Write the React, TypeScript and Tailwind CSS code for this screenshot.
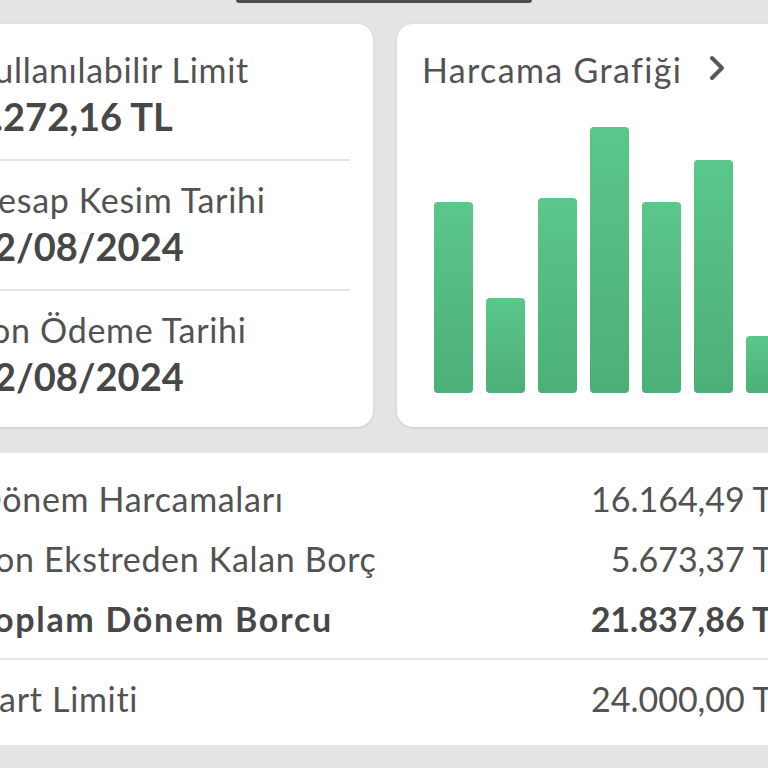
import React from 'react';

const bars = [191, 95, 195, 266, 191, 233, 57, 140];

const rows = [
  { label: 'Dönem Harcamaları', value: '16.164,49 TL' },
  { label: 'Son Ekstreden Kalan Borç', value: '5.673,37 TL' },
  { label: 'Toplam Dönem Borcu', value: '21.837,86 TL', bold: true },
];

const InfoBlock = ({ label, value }: { label: string; value: string }) => (
  <div>
    <div className="text-[34px] leading-[40px] tracking-[0.02em] text-[#525252]">{label}</div>
    <div className="mt-0.5 text-[38px] leading-[48px] font-bold text-[#474747]">{value}</div>
  </div>
);

export default function App() {
  return (
    <div
      className="w-[768px] h-[768px] overflow-hidden bg-[#e4e4e4]"
      style={{ fontFamily: 'Lato, "Noto Sans", sans-serif' }}
    >
      <div className="flex justify-center">
        <div className="w-[296px] h-[3px] rounded-b-md bg-[#4b4b4b]" />
      </div>

      <div className="ml-[-48px] w-[866px] mt-[21px]">
        <div className="grid grid-cols-2 gap-6">
          <div className="bg-white rounded-2xl shadow-sm pl-[20px] pr-[23px] pt-[26px] pb-[27px]">
            <InfoBlock label="Kullanılabilir Limit" value="4.272,16 TL" />
            <div className="my-[19px] ml-[6px] h-[2px] bg-[#e6e6e6]" />
            <InfoBlock label="Hesap Kesim Tarihi" value="12/08/2024" />
            <div className="my-[19px] ml-[6px] h-[2px] bg-[#e6e6e6]" />
            <InfoBlock label="Son Ödeme Tarihi" value="22/08/2024" />
          </div>

          <div className="bg-white rounded-2xl shadow-sm px-[25px] pt-[26px] pb-[34px] flex flex-col">
            <div className="flex items-center gap-[25px]">
              <span className="text-[34px] leading-[40px] tracking-[0.04em] text-[#525252]">Harcama Grafiği</span>
              <svg width="20" height="28" viewBox="0 0 20 28" className="mt-[-4px]">
                <polyline points="5,4 15,14 5,24" fill="none" stroke="#585858" strokeWidth="4" strokeLinecap="round" strokeLinejoin="round" />
              </svg>
            </div>
            <div className="flex-1 flex items-end gap-[13px] pl-3">
              {bars.map((h, i) => (
                <div
                  key={i}
                  className="w-[39px] shrink-0 rounded-[4px] bg-gradient-to-b from-[#5bc78a] to-[#4caf77]"
                  style={{ height: h }}
                />
              ))}
            </div>
          </div>
        </div>

        <div className="mt-[26px] bg-white rounded-2xl pl-[24px] pr-[28px] pt-[26px] pb-[26px]">
          <div className="flex flex-col gap-[20px]">
            {rows.map((r) => (
              <div
                key={r.label}
                className={`flex justify-between text-[34px] leading-[40px] ${
                  r.bold ? 'font-bold text-[#474747]' : 'text-[#525252]'
                }`}
              >
                <span className={r.bold ? 'tracking-[0.05em]' : 'tracking-[0.02em]'}>{r.label}</span>
                <span>{r.value}</span>
              </div>
            ))}
          </div>
          <div className="my-[19px] h-[2px] bg-[#e6e6e6] -mx-[24px]" />
          <div className="flex justify-between text-[34px] leading-[40px] text-[#525252]">
            <span className="tracking-[0.02em]">Kart Limiti</span>
            <span>24.000,00 TL</span>
          </div>
        </div>
      </div>
    </div>
  );
}
